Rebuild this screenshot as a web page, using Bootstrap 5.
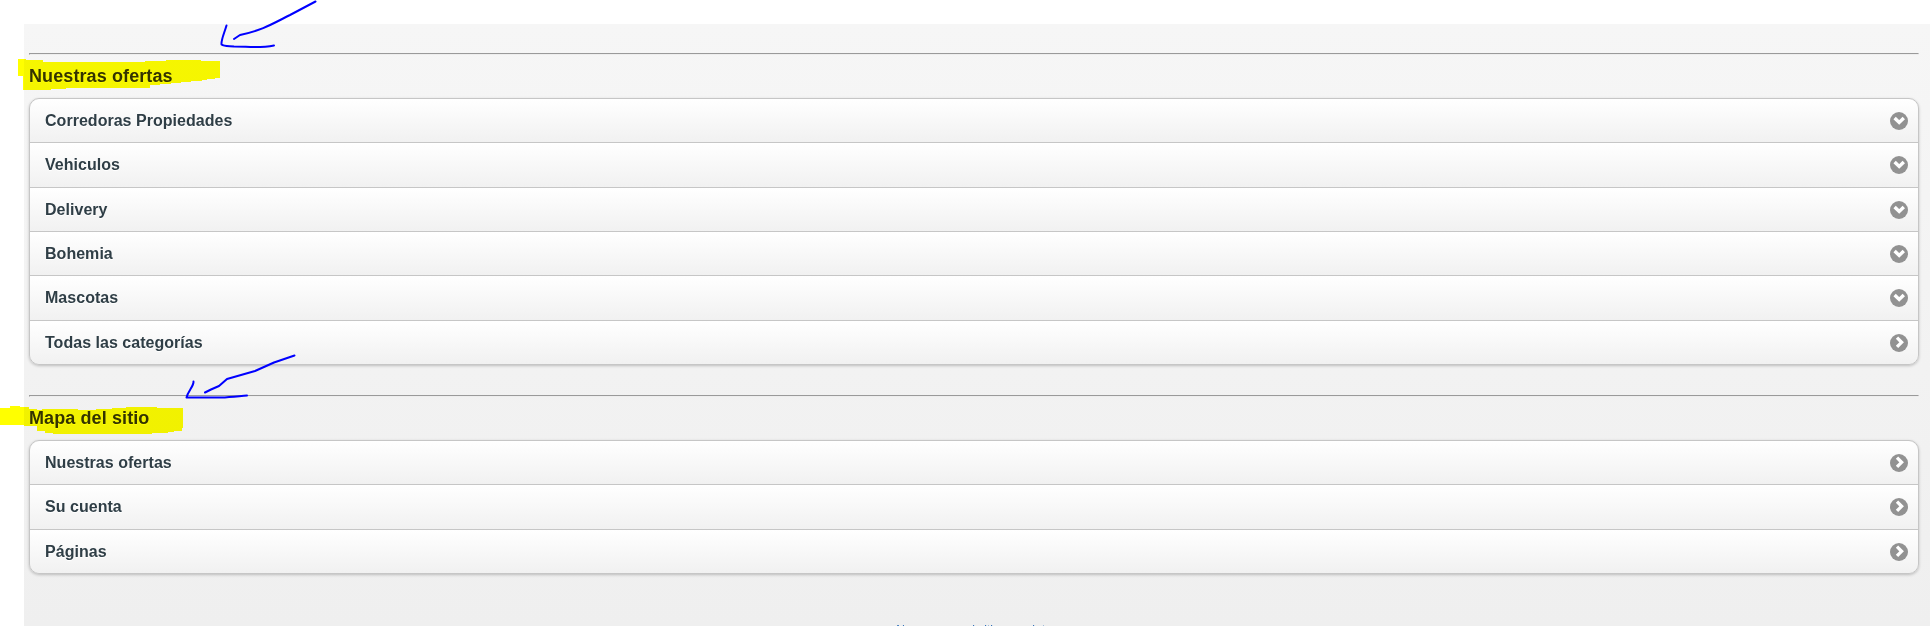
<!DOCTYPE html>
<html lang="es">
<head>
<meta charset="utf-8">
<title>Nuestras ofertas</title>
<link href="https://cdn.jsdelivr.net/npm/bootstrap@5.3.0/dist/css/bootstrap.min.css" rel="stylesheet">
<style>
html, body { height: 626px; }
body { font-family: "Liberation Sans", Arial, sans-serif; background: #fff; }
.site { height: 602px; margin: 24px 0 0 24px; padding: 29px 11px 0 5px; background: linear-gradient(#f6f6f6, #efefef); color: #333; }
.rule { height: 2px; border: 1px solid; border-color: #9a9a9a #eee #eee #9a9a9a; }
.block-title { font-size: 18px; font-weight: 700; line-height: 22px; height: 43px; padding-top: 10px; margin: 0; letter-spacing: .1px; text-shadow: 0 1px 0 #fff; white-space: nowrap; }
.menu-list { border: 1px solid #c6c6c6; border-radius: 10px; overflow: hidden; box-shadow: 0 1px 3px rgba(0,0,0,.22); margin-bottom: 30px; --bs-list-group-bg: transparent; }
.menu-list .list-group-item { height: 44.333px; padding: 0 10px 0 15px; border: 0; border-top: 1px solid #c6c6c6; background: linear-gradient(#fff, #f1f1f1); color: #2f3e46; font-size: 16px; font-weight: 700; line-height: 20px; letter-spacing: .03px; text-shadow: 0 1px 0 #fff; }
.menu-list .list-group-item:first-child { border-top: 0; height: 43.333px; }
.menu-list .list-group-item:nth-child(3n) { padding-top: 1px; }
.menu-list svg { display: block; width: 18px; height: 18px; }
.full-link { font-size: 12px; line-height: 14px; margin-top: 49px; color: #2a6db8; text-decoration: none; }
.ink { width: 360px; height: 450px; pointer-events: none; }
.marker { mix-blend-mode: multiply; }
</style>
</head>
<body class="overflow-hidden position-relative">
<svg class="d-none">
  <symbol id="down" viewBox="0 0 18 18"><circle cx="9" cy="9" r="9" fill="#929292"/><path d="M4.600 6 9.200 10.400 13.800 6" fill="none" stroke="#fff" stroke-width="3.400"/></symbol>
  <symbol id="next" viewBox="0 0 18 18"><circle cx="9" cy="9" r="9" fill="#929292"/><path d="M7 3.700 11.600 8.300 7 12.900" fill="none" stroke="#fff" stroke-width="3.300"/></symbol>
</svg>
<main class="site">
  <div class="rule"></div>
  <h3 class="block-title">Nuestras ofertas</h3>
  <div class="list-group menu-list">
    <a class="list-group-item d-flex justify-content-between align-items-center"><span>Corredoras Propiedades</span><svg><use href="#down"/></svg></a>
    <a class="list-group-item d-flex justify-content-between align-items-center"><span>Vehiculos</span><svg><use href="#down"/></svg></a>
    <a class="list-group-item d-flex justify-content-between align-items-center"><span>Delivery</span><svg><use href="#down"/></svg></a>
    <a class="list-group-item d-flex justify-content-between align-items-center"><span>Bohemia</span><svg><use href="#down"/></svg></a>
    <a class="list-group-item d-flex justify-content-between align-items-center"><span>Mascotas</span><svg><use href="#down"/></svg></a>
    <a class="list-group-item d-flex justify-content-between align-items-center"><span>Todas las categorías</span><svg><use href="#next"/></svg></a>
  </div>
  <div class="rule"></div>
  <h3 class="block-title">Mapa del sitio</h3>
  <div class="list-group menu-list mb-0">
    <a class="list-group-item d-flex justify-content-between align-items-center"><span>Nuestras ofertas</span><svg><use href="#next"/></svg></a>
    <a class="list-group-item d-flex justify-content-between align-items-center"><span>Su cuenta</span><svg><use href="#next"/></svg></a>
    <a class="list-group-item d-flex justify-content-between align-items-center"><span>Páginas</span><svg><use href="#next"/></svg></a>
  </div>
  <a class="full-link d-block text-center">Navegar por el sitio completo</a>
</main>
<!-- highlighter strokes -->
<svg class="ink marker position-absolute top-0 start-0" viewBox="0 0 360 450" fill="#ff0" shape-rendering="crispEdges">
  <path d="M18 59H26V60H43V62H145V61H166V60H201V61H220V78H215V79H207V80H202V81H191V82H181V83H171V84H160V85H150V88H66V89H51V90H23V76H18Z"/>
  <path d="M0 408H10V406H20V407H29V409H37V410H42V409H78V410H96V409H112V408H126V407H157V408H183V428H182V431H174V432H168V433H152V434H53V433H45V431H37V426H24V425H0Z"/>
</svg>
<!-- pen arrows -->
<svg class="ink position-absolute top-0 start-0" viewBox="0 0 360 450" fill="none" stroke="#00f" stroke-width="2" stroke-linecap="round" stroke-linejoin="round">
  <path d="M315.500 1.500 290 15C272 24 263 30 240 35L234 39"/>
  <path d="M226.500 25.500C224 34 221 40 221.500 44.500C224 46.500 228 46 234 46.500C248 46.500 259 48.500 274 45.500"/>
  <path d="M294.500 355.500 274 362.500 255 371 227 379 219 386 211 389.500 205 392.500"/>
  <path d="M193.500 381.500C194 386 188 391 186.500 397.500H221C232 397 240 396 247 395.500"/>
</svg>
<script src="https://cdn.jsdelivr.net/npm/bootstrap@5.3.0/dist/js/bootstrap.bundle.min.js"></script>
</body>
</html>
